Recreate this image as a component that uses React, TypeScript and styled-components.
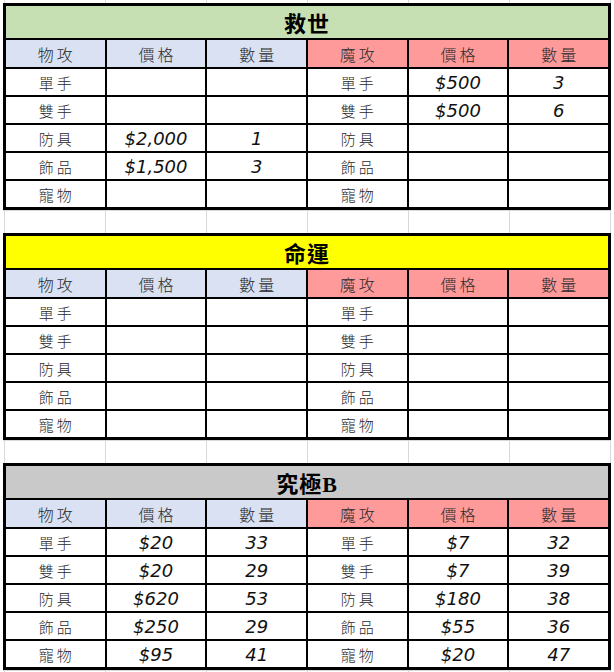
import React from "react";
import styled, { createGlobalStyle } from "styled-components";

const GlobalStyle = createGlobalStyle`
  html, body {
    margin: 0;
    padding: 0;
    background: #ffffff;
  }
  body {
    font-family: "Noto Sans CJK TC", "Noto Sans", sans-serif;
  }
`;

const Sheet = styled.div`
  width: 614px;
  min-height: 672px;
  box-sizing: border-box;
  padding: 3px 0 0 3px;
  display: flex;
  flex-direction: column;
  gap: 23px;
  background-color: #ffffff;
  background-image: linear-gradient(to right, transparent 100px, #d9d9d9 100px);
  background-size: 101px 100%;
  background-position: 5px 0;
`;

const Table = styled.div`
  width: 608px;
  box-sizing: border-box;
  display: grid;
  grid-template-columns: repeat(6, 1fr);
  grid-template-rows: 32px 27px repeat(5, 26px);
  gap: 2px;
  padding: 3px;
  background: #000000;
  box-shadow: 0 1px 0 #d9d9d9;
`;

const TitleCell = styled.div<{ $bg: string }>`
  grid-column: 1 / -1;
  background: ${(p) => p.$bg};
  display: flex;
  align-items: center;
  justify-content: center;
  font-family: "Liberation Serif", "Noto Sans CJK TC", serif;
  font-weight: 700;
  font-size: 22px;
  letter-spacing: 1px;
  color: #000;
`;

const HeadCell = styled.div<{ $magic?: boolean }>`
  background: ${(p) => (p.$magic ? "#ff9a9a" : "#d9e1f2")};
  display: flex;
  align-items: center;
  justify-content: center;
  font-size: 16px;
  font-weight: 300;
  letter-spacing: 3px;
  padding-left: 3px;
  color: #2a2a2a;
`;

const LabelCell = styled.div`
  background: #ffffff;
  display: flex;
  align-items: center;
  justify-content: center;
  font-size: 15px;
  font-weight: 300;
  letter-spacing: 3px;
  padding-left: 3px;
  color: #2a2a2a;
`;

const ValueCell = styled.div`
  background: #ffffff;
  display: flex;
  align-items: center;
  justify-content: center;
  font-family: "DejaVu Sans", "Liberation Sans", sans-serif;
  font-style: italic;
  font-size: 18px;
  color: #111;
`;

type Pair = [string, string];

interface Section {
  title: string;
  color: string;
  phys: Pair[];
  magic: Pair[];
}

const labels = ["單手", "雙手", "防具", "飾品", "寵物"];
const empty: Pair[] = labels.map(() => ["", ""]);

const sections: Section[] = [
  {
    title: "救世",
    color: "#c6e0b4",
    phys: [["", ""], ["", ""], ["$2,000", "1"], ["$1,500", "3"], ["", ""]],
    magic: [["$500", "3"], ["$500", "6"], ["", ""], ["", ""], ["", ""]],
  },
  { title: "命運", color: "#ffff00", phys: empty, magic: empty },
  {
    title: "究極B",
    color: "#c9c9c9",
    phys: [["$20", "33"], ["$20", "29"], ["$620", "53"], ["$250", "29"], ["$95", "41"]],
    magic: [["$7", "32"], ["$7", "39"], ["$180", "38"], ["$55", "36"], ["$20", "47"]],
  },
];

function PriceTable({ section }: { section: Section }) {
  return (
    <Table>
      <TitleCell $bg={section.color}>{section.title}</TitleCell>
      <HeadCell>物攻</HeadCell>
      <HeadCell>價格</HeadCell>
      <HeadCell>數量</HeadCell>
      <HeadCell $magic>魔攻</HeadCell>
      <HeadCell $magic>價格</HeadCell>
      <HeadCell $magic>數量</HeadCell>
      {labels.map((label, i) => (
        <React.Fragment key={label}>
          <LabelCell>{label}</LabelCell>
          <ValueCell>{section.phys[i][0]}</ValueCell>
          <ValueCell>{section.phys[i][1]}</ValueCell>
          <LabelCell>{label}</LabelCell>
          <ValueCell>{section.magic[i][0]}</ValueCell>
          <ValueCell>{section.magic[i][1]}</ValueCell>
        </React.Fragment>
      ))}
    </Table>
  );
}

export default function App() {
  return (
    <>
      <GlobalStyle />
      <Sheet>
        {sections.map((s) => (
          <PriceTable key={s.title} section={s} />
        ))}
      </Sheet>
    </>
  );
}
